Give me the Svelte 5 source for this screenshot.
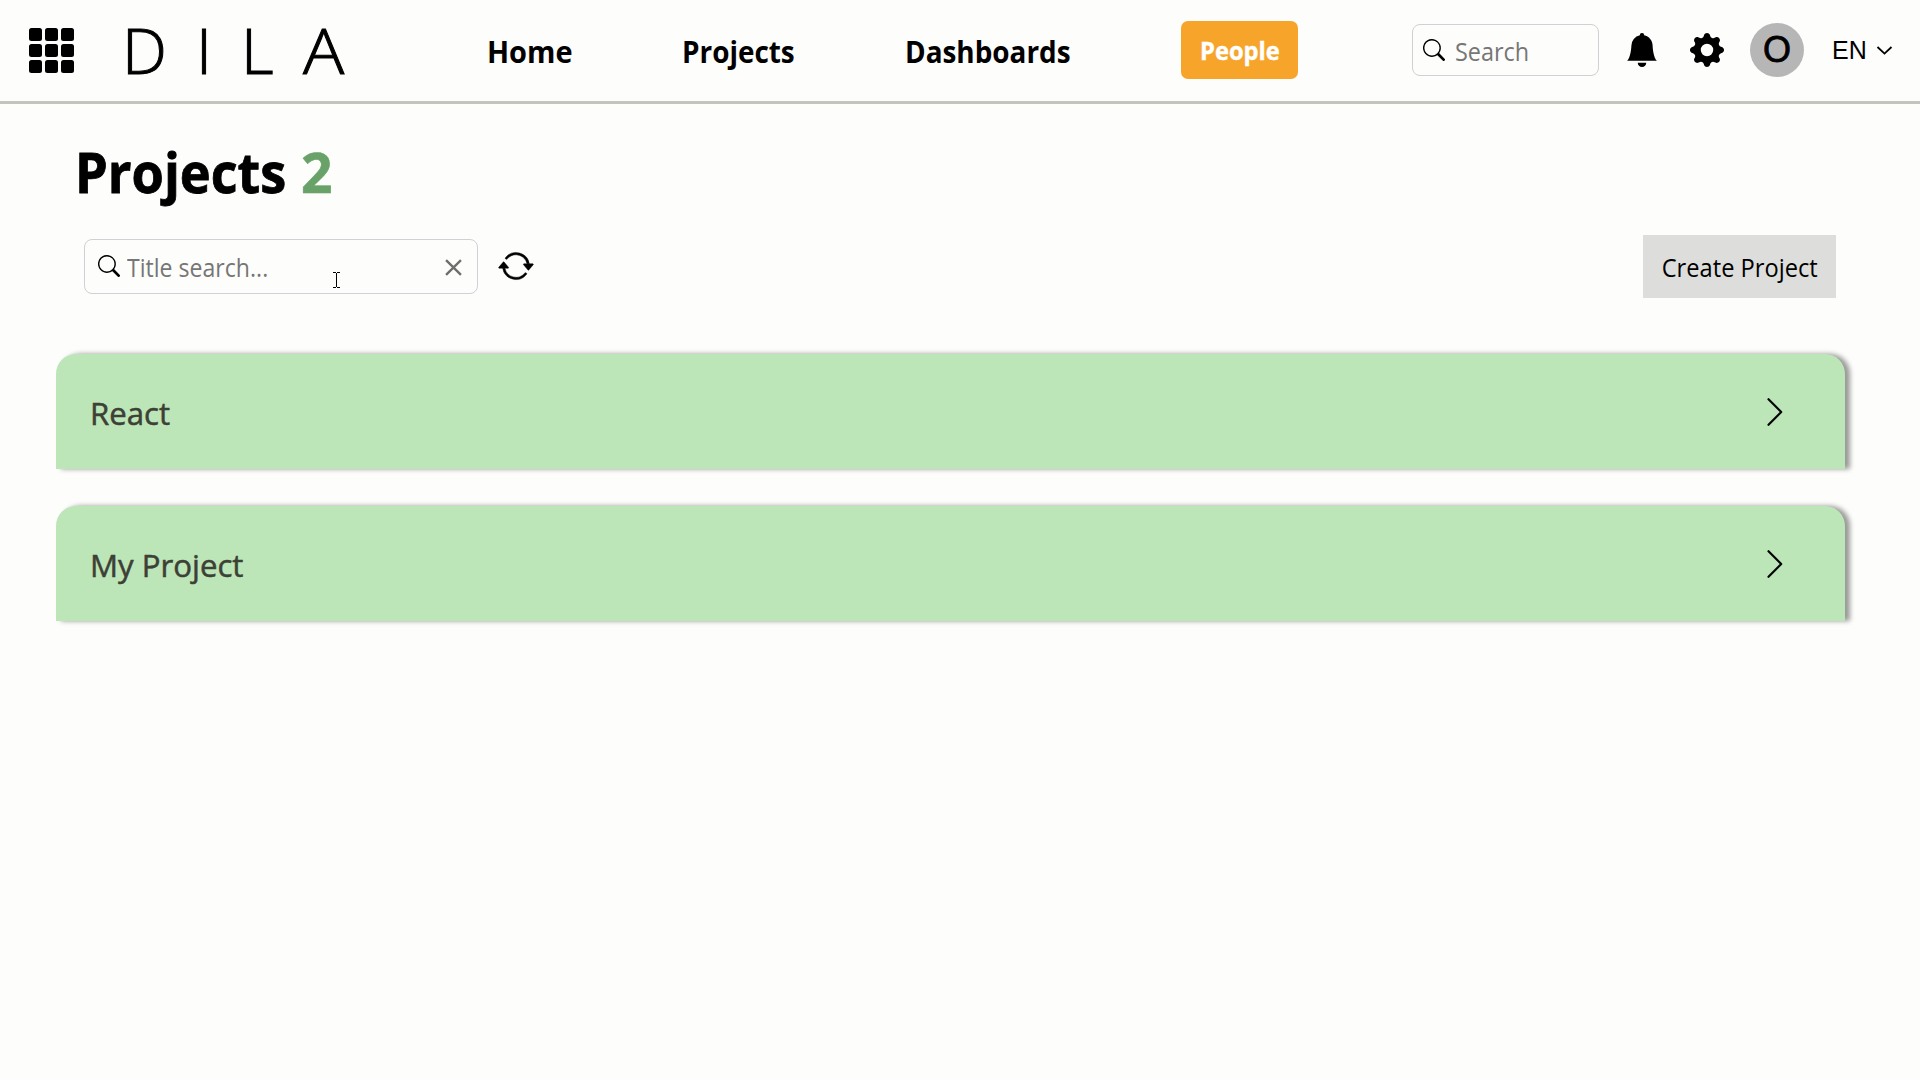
<script>
  const links = [
    { label: 'Home', cls: 'home' },
    { label: 'Projects', cls: 'projects' },
    { label: 'Dashboards', cls: 'dashboards' }
  ];
  const projects = ['React', 'My Project'];
  const cells = [0, 1, 2, 3, 4, 5, 6, 7, 8];
</script>

{#snippet searchIcon()}
  <svg class="lens" viewBox="0 0 16 16" fill="currentColor">
    <path d="M11.742 10.344a6.5 6.5 0 1 0-1.397 1.398h-.001q.044.06.098.115l3.85 3.85a1 1 0 0 0 1.415-1.414l-3.85-3.85a1 1 0 0 0-.115-.1zM12 6.5a5.5 5.5 0 1 1-11 0 5.5 5.5 0 0 1 11 0" />
  </svg>
{/snippet}

<header>
  <div class="apps">
    {#each cells as cell (cell)}<i></i>{/each}
  </div>
  <div class="logo"><span>D</span><span>I</span><span>L</span><span class="last">A</span></div>
  <nav>
    {#each links as link (link.label)}
      <span class="link {link.cls}"><span class="text">{link.label}</span></span>
    {/each}
    <button class="people"><span>People</span></button>
  </nav>
  <div class="search small">
    {@render searchIcon()}
    <span class="hint">Search</span>
  </div>
  <svg class="bell" viewBox="0 0 16 16">
    <path d="M8 16a2 2 0 0 0 2-2H6a2 2 0 0 0 2 2m.995-14.901a1 1 0 1 0-1.990 0A5 5 0 0 0 3 6c0 1.098-.5 6-2 7h14c-1.500-1-2-5.902-2-7 0-2.420-1.720-4.440-4.005-4.901" />
  </svg>
  <svg class="gear" viewBox="0 0 16 16">
    <path d="M9.405 1.050c-.413-1.400-2.397-1.400-2.810 0l-.1.340a1.464 1.464 0 0 1-2.105.872l-.310-.170c-1.283-.698-2.686.705-1.987 1.987l.169.311c.446.820.023 1.841-.872 2.105l-.340.100c-1.400.413-1.400 2.397 0 2.810l.340.100a1.464 1.464 0 0 1 .872 2.105l-.170.310c-.698 1.283.705 2.686 1.987 1.987l.311-.169a1.464 1.464 0 0 1 2.105.872l.100.340c.413 1.400 2.397 1.400 2.810 0l.100-.340a1.464 1.464 0 0 1 2.105-.872l.310.170c1.283.698 2.686-.705 1.987-1.987l-.169-.311a1.464 1.464 0 0 1 .872-2.105l.340-.100c1.400-.413 1.400-2.397 0-2.810l-.340-.100a1.464 1.464 0 0 1-.872-2.105l.170-.310c.698-1.283-.705-2.686-1.987-1.987l-.311.169a1.464 1.464 0 0 1-2.105-.872zM8 10.930a2.929 2.929 0 1 1 0-5.860 2.929 2.929 0 0 1 0 5.858z" />
  </svg>
  <div class="avatar">O</div>
  <div class="lang">
    <span>EN</span>
    <svg viewBox="0 0 16 9"><path d="M1 1l7 6.600 7-6.600" /></svg>
  </div>
</header>

<main>
  <h1><span class="title"><span class="text">Projects</span></span><span class="count">2</span></h1>
  <div class="tools">
    <div class="search wide">
      {@render searchIcon()}
      <span class="hint">Title search...</span>
      <svg class="clear" viewBox="0 0 16 16"><path d="M1 1l14 14M15 1L1 15" /></svg>
      <svg class="caret" viewBox="0 0 7 16"><path d="M0 .5h3M4 .5h3M0 15.500h3M4 15.500h3M3.500 1v14" /></svg>
    </div>
    <svg class="refresh" viewBox="0 0 16 16">
      <path d="M11.534 7h3.932a.25.25 0 0 1 .192.410l-1.966 2.360a.25.25 0 0 1-.384 0l-1.966-2.360a.25.25 0 0 1 .192-.410m-11 2h3.932a.25.25 0 0 0 .192-.410L2.692 6.230a.25.25 0 0 0-.384 0L.342 8.590A.25.25 0 0 0 .534 9" />
      <path fill-rule="evenodd" d="M8 3c-1.552 0-2.940.707-3.857 1.818a.5.5 0 1 1-.771-.636A6.002 6.002 0 0 1 13.917 7H12.900A5 5 0 0 0 8 3M3.100 9a5.002 5.002 0 0 0 8.757 2.182.5.5 0 1 1 .771.636A6.002 6.002 0 0 1 2.083 9z" />
    </svg>
    <button class="create"><span>Create Project</span></button>
  </div>
  <div class="list">
    {#each projects as project (project)}
      <article>
        <span class="name">{project}</span>
        <svg viewBox="0 0 16 28"><path d="M1.500 1.200L14.200 14 1.500 26.800" /></svg>
      </article>
    {/each}
  </div>
</main>

<style>
  :global(body) {
    background: #fdfdfb;
    color: #000;
    font-family: 'Open Sans', 'Noto Sans', sans-serif;
  }
  :global(#app) {
    min-height: 1080px;
  }
  svg {
    display: block;
    flex: none;
  }
  span {
    white-space: nowrap;
  }
  button {
    border: 0;
    padding: 0;
    font: inherit;
    display: flex;
    align-items: center;
    justify-content: center;
  }
  header {
    box-sizing: border-box;
    height: 104px;
    border-bottom: 3px solid #c5c3bd;
    display: flex;
    align-items: center;
    padding-left: 29px;
  }
  .apps {
    display: grid;
    grid-template-columns: repeat(3, 13px);
    gap: 3px;
    flex: none;
  }
  .apps i {
    height: 13px;
    border-radius: 2.500px;
    background: #000;
  }
  .logo {
    display: grid;
    grid-template-columns: 74px 45px 62px 42px;
    width: 223px;
    margin: 0 0 2px 48px;
    font-size: 63.500px;
    font-weight: 300;
    line-height: 88px;
    -webkit-text-stroke: 1px #000;
    flex: none;
  }
  .last {
    transform: scaleX(1.080);
    transform-origin: left;
  }
  .text {
    display: inline-block;
    transform-origin: left;
  }
  nav {
    display: flex;
    align-items: center;
    width: 813px;
    margin-left: 142px;
    flex: none;
  }
  .link {
    font-size: 29.500px;
    font-weight: 700;
    line-height: 40px;
    margin-top: 2px;
    flex: none;
  }
  .home {
    width: 195px;
  }
  .projects {
    width: 223px;
  }
  .dashboards {
    width: 276px;
  }
  .home .text {
    transform: scaleX(0.980);
  }
  .projects .text,
  .dashboards .text {
    transform: scaleX(0.945);
  }
  .people {
    width: 117px;
    height: 58px;
    margin-bottom: 2px;
    border-radius: 7px;
    background: #f6a52a;
    color: #fff;
    font-size: 25.500px;
    font-weight: 700;
  }
  .people span {
    transform: scaleX(0.930);
    -webkit-text-stroke: 0.400px #fff;
  }
  .search {
    box-sizing: border-box;
    border: 1px solid #d0d0d6;
    border-radius: 8px;
    display: flex;
    align-items: center;
    flex: none;
    font-size: 26px;
  }
  .lens {
    width: 22px;
    height: 22px;
  }
  .hint {
    color: #767676;
    transform: scaleX(0.888);
    transform-origin: left;
  }
  .small {
    width: 187px;
    height: 52px;
    padding-left: 10px;
    margin: 0 0 2px 112px;
  }
  .small .hint {
    margin-left: 10px;
    padding-top: 2px;
    transform: scaleX(0.900);
  }
  .bell {
    width: 34px;
    height: 34px;
    margin: 0 0 2px 26px;
  }
  .gear {
    width: 34px;
    height: 34px;
    margin: 0 0 2px 31px;
  }
  .avatar {
    width: 54px;
    height: 54px;
    margin: 0 0 2px 26px;
    border-radius: 50%;
    background: #b6b6b6;
    display: flex;
    align-items: center;
    justify-content: center;
    font: 36px 'Liberation Sans', sans-serif;
    -webkit-text-stroke: 0.800px #000;
    flex: none;
  }
  .lang {
    display: flex;
    align-items: center;
    margin-left: 28px;
    font: 25px 'Liberation Sans', sans-serif;
  }
  .lang svg {
    width: 17px;
    height: 9px;
    margin-left: 9px;
    fill: none;
    stroke: #000;
    stroke-width: 1.800;
  }
  main {
    padding: 0 75px 0 56px;
  }
  h1 {
    display: flex;
    margin: 0;
    padding: 30px 0 0 19px;
    font-size: 55px;
    line-height: 76px;
    font-weight: 700;
  }
  .title {
    width: 226px;
    -webkit-text-stroke: 0.800px #000;
  }
  .title .text {
    transform: scaleX(0.950);
  }
  .count {
    color: #68a269;
    -webkit-text-stroke: 0.600px #68a269;
  }
  .tools {
    display: flex;
    align-items: center;
    height: 63px;
    margin: 25px 9px 0 28px;
  }
  .wide {
    position: relative;
    width: 394px;
    height: 55px;
    padding: 0 15px 0 13px;
  }
  .wide .lens {
    margin-bottom: 1px;
  }
  .wide .hint {
    margin-left: 7px;
    padding-top: 1px;
  }
  .clear {
    width: 17px;
    height: 17px;
    margin: 2px 0 0 auto;
    fill: none;
    stroke: #6e6e6e;
    stroke-width: 2.200;
  }
  .caret {
    position: absolute;
    left: 248px;
    top: 32px;
    width: 7px;
    height: 16px;
    fill: none;
    stroke: #000;
  }
  .refresh {
    width: 36px;
    height: 36px;
    margin: 0 0 1px 19.500px;
    stroke: #000;
    stroke-width: 0.200;
  }
  .create {
    width: 193px;
    height: 63px;
    margin-left: auto;
    background: #dddddb;
    font-size: 26px;
  }
  .create span {
    transform: scaleX(0.910);
    padding-top: 1px;
  }
  .list {
    display: grid;
    gap: 37px;
    margin-top: 56px;
  }
  article {
    height: 115px;
    display: flex;
    align-items: center;
    justify-content: space-between;
    padding: 0 62px 0 34px;
    border-radius: 20px 20px 0 0;
    background: #bce6b8;
    box-shadow: 5px 0 5px rgba(0, 0, 0, 0.400);
    color: #3c4035;
    font-size: 31.500px;
    -webkit-text-stroke: 0.500px #3c4035;
  }
  .name {
    padding-top: 2px;
    transform: scaleX(0.990);
    transform-origin: left;
  }
  article svg {
    width: 16px;
    height: 28px;
    fill: none;
    stroke: #000;
    stroke-width: 2.200;
    stroke-linecap: round;
    stroke-linejoin: round;
  }
</style>
